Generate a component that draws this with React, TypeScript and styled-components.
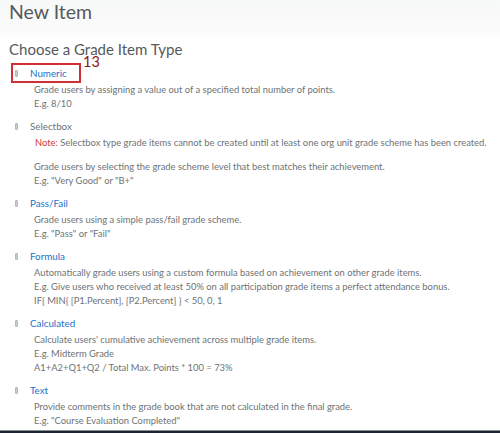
import React from "react";
import styled, { createGlobalStyle } from "styled-components";

const Global = createGlobalStyle`
  html, body { margin: 0; padding: 0; background: #ffffff; }
  body { font-family: Lato, "Open Sans", "Liberation Sans", sans-serif; }
  * { box-sizing: border-box; }
`;

const Page = styled.div`
  width: 500px;
  height: 433px;
  display: flex;
  flex-direction: column;
  overflow: hidden;
  background: #ffffff;
`;

const Header = styled.header`
  height: 40px;
  flex: none;
  padding: 0 9px;
  background: linear-gradient(#f7f8f8, #fbfbfc 80%, #ffffff);
`;

const Title = styled.h1`
  margin: 0;
  font-size: 19.5px;
  line-height: 24px;
  font-weight: 400;
  color: #565a5c;
`;

const Main = styled.main`
  flex: 1;
  min-height: 0;
  padding: 0 9px;
`;

const SectionTitle = styled.h2`
  margin: 0 0 7px;
  font-size: 15px;
  line-height: 18px;
  font-weight: 400;
  color: #565a5c;
`;

const List = styled.ul`
  list-style: none;
  margin: 0;
  padding: 0;
  display: flex;
  flex-direction: column;
  gap: 7px;
`;

const Item = styled.li`
  display: flex;
  flex-direction: column;
`;

const TitleRow = styled.div`
  position: relative;
  display: flex;
  align-items: center;
  gap: 12px;
  height: 16px;
  padding-left: 6px;
`;

const Grip = styled.span`
  width: 3px;
  height: 7px;
  background: #c9cbcd;
  border: 1px solid #b5b8ba;
  border-radius: 1px;
  flex: none;
`;

const Link = styled.a<{ $disabled?: boolean }>`
  font-size: 9.8px;
  line-height: 16px;
  color: ${(p) => (p.$disabled ? "#6e7376" : "#1a73c9")};
  text-decoration: none;
`;

const Highlight = styled.span`
  position: absolute;
  left: 2px;
  top: -2px;
  width: 70px;
  height: 20px;
  border: 2px solid #d22f35;
  pointer-events: none;
`;

const Badge = styled.span`
  position: absolute;
  left: 74px;
  top: -11px;
  font-size: 14.5px;
  line-height: 16px;
  color: #8c1515;
  font-weight: 400;
`;

const Desc = styled.div`
  padding-left: 25px;
  margin-top: 2px;
  display: flex;
  flex-direction: column;
  gap: 10px;
`;

const Para = styled.p<{ $indent?: number }>`
  margin: 0;
  padding-left: ${(p) => p.$indent ?? 0}px;
  font-size: 9.4px;
  line-height: 14px;
  color: #6e7376;
  white-space: nowrap;
`;

const NoteLabel = styled.span`
  color: #d3383e;
`;

const BottomBar = styled.div`
  height: 3px;
  flex: none;
  background: #1d2333;
  border-top: 1px solid #8a8f96;
`;

type ItemData = {
  name: string;
  disabled?: boolean;
  highlight?: string;
  note?: string;
  lines: string[];
};

const items: ItemData[] = [
  {
    name: "Numeric",
    highlight: "13",
    lines: [
      "Grade users by assigning a value out of a specified total number of points.",
      "E.g. 8/10",
    ],
  },
  {
    name: "Selectbox",
    disabled: true,
    note:
      "Selectbox type grade items cannot be created until at least one org unit grade scheme has been created.",
    lines: [
      "Grade users by selecting the grade scheme level that best matches their achievement.",
      'E.g. "Very Good" or "B+"',
    ],
  },
  {
    name: "Pass/Fail",
    lines: ["Grade users using a simple pass/fail grade scheme.", 'E.g. "Pass" or "Fail"'],
  },
  {
    name: "Formula",
    lines: [
      "Automatically grade users using a custom formula based on achievement on other grade items.",
      "E.g. Give users who received at least 50% on all participation grade items a perfect attendance bonus.",
      "IF{ MIN{ [P1.Percent], [P2.Percent] } < 50, 0, 1",
    ],
  },
  {
    name: "Calculated",
    lines: [
      "Calculate users' cumulative achievement across multiple grade items.",
      "E.g. Midterm Grade",
      "A1+A2+Q1+Q2 / Total Max. Points * 100 = 73%",
    ],
  },
  {
    name: "Text",
    lines: [
      "Provide comments in the grade book that are not calculated in the final grade.",
      'E.g. "Course Evaluation Completed"',
    ],
  },
];

export default function App() {
  return (
    <Page>
      <Global />
      <Header>
        <Title>New Item</Title>
      </Header>
      <Main>
        <SectionTitle>Choose a Grade Item Type</SectionTitle>
        <List>
          {items.map((it) => (
            <Item key={it.name}>
              <TitleRow>
                <Grip />
                <Link href="#" $disabled={it.disabled}>
                  {it.name}
                </Link>
                {it.highlight && (
                  <>
                    <Highlight />
                    <Badge>{it.highlight}</Badge>
                  </>
                )}
              </TitleRow>
              <Desc>
                {it.note && (
                  <Para $indent={1}>
                    <NoteLabel>Note:</NoteLabel> {it.note}
                  </Para>
                )}
                <Para>
                  {it.lines.map((l, i) => (
                    <React.Fragment key={i}>
                      {i > 0 && <br />}
                      {l}
                    </React.Fragment>
                  ))}
                </Para>
              </Desc>
            </Item>
          ))}
        </List>
      </Main>
      <BottomBar />
    </Page>
  );
}
